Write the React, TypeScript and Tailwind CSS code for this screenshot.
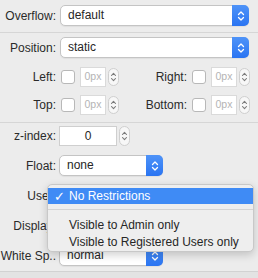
import type { ReactNode } from 'react';

const font = { fontFamily: '"Liberation Sans", Arial, sans-serif' };

function UpDown({ color = 'white' }: { color?: string }) {
  return (
    <svg width="8" height="12" viewBox="0 0 8 12" fill="none">
      <path d="M1.5 4.5 L4 2 L6.5 4.5" stroke={color} strokeWidth="1.3" strokeLinecap="round" strokeLinejoin="round" />
      <path d="M1.5 7.5 L4 10 L6.5 7.5" stroke={color} strokeWidth="1.3" strokeLinecap="round" strokeLinejoin="round" />
    </svg>
  );
}

function Select({ value, width }: { value: string; width: string }) {
  return (
    <div
      className={`flex h-[21px] items-stretch rounded-[5px] border border-[#c4c4c4] bg-white shadow-[0_1px_1px_rgba(0,0,0,0.06)] ${width}`}
    >
      <span className="flex-1 pl-[7px] text-[12px] leading-[19px] text-[#262626]">{value}</span>
      <span className="-my-px -mr-px flex w-[17px] items-center justify-center rounded-r-[5px] bg-gradient-to-b from-[#4e93f8] to-[#2a74f2]">
        <UpDown />
      </span>
    </div>
  );
}

function Stepper({ h = 'h-[18px]' }: { h?: string }) {
  return (
    <div className={`flex w-[11px] items-center justify-center rounded-full border border-[#cfcfcf] bg-[#f7f7f7] ${h}`}>
      <svg width="7" height="12" viewBox="0 0 7 12" fill="none">
        <path d="M1.5 4.5 L3.5 2.3 L5.5 4.5" stroke="#7c7c7c" strokeWidth="1.1" strokeLinecap="round" strokeLinejoin="round" />
        <path d="M1.5 7.5 L3.5 9.7 L5.5 7.5" stroke="#7c7c7c" strokeWidth="1.1" strokeLinecap="round" strokeLinejoin="round" />
      </svg>
    </div>
  );
}

function OffsetField({ label, labelWidth }: { label: string; labelWidth: string }) {
  return (
    <div className="flex items-center">
      <span className={`text-right text-[12px] text-[#2a2a2a] ${labelWidth}`}>{label}</span>
      <span className="ml-[5px] h-[14px] w-[14px] rounded-[3px] border border-[#b8b8b8] bg-white" />
      <span className="ml-[5px] flex h-[20px] w-[26px] items-center justify-center border border-[#dadada] bg-white text-[10.5px] text-[#b4b4b4]">
        0px
      </span>
      <span className="ml-[2px]">
        <Stepper />
      </span>
    </div>
  );
}

function Row({ label, children, mt, gap = 'ml-[3px]' }: { label: string; children: ReactNode; mt: string; gap?: string }) {
  return (
    <div className={`flex items-center ${mt}`}>
      <span className="w-[56px] shrink-0 whitespace-nowrap text-right text-[12px] text-[#2a2a2a]">{label}</span>
      <div className={gap}>{children}</div>
    </div>
  );
}

export default function App() {
  return (
    <div className="relative h-[278px] w-[258px] overflow-hidden bg-[#ececec]" style={font}>
      <div className="pt-[5px]">
        <Row label="Overflow:" mt="mt-0" gap="ml-[4px]">
          <Select value="default" width="w-[189px]" />
        </Row>
        <div className="mt-[6px] h-px bg-[#d6d6d6]" />
        <Row label="Position:" mt="mt-[4px]" gap="ml-[4px]">
          <Select value="static" width="w-[189px]" />
        </Row>

        {/* Offsets */}
        <div className="mt-[9px] flex items-center">
          <OffsetField label="Left:" labelWidth="w-[56px]" />
          <OffsetField label="Right:" labelWidth="w-[68px]" />
        </div>
        <div className="mt-[8px] flex items-center">
          <OffsetField label="Top:" labelWidth="w-[56px]" />
          <OffsetField label="Bottom:" labelWidth="w-[68px]" />
        </div>
        <div className="mt-[7px] h-px bg-[#d6d6d6]" />

        <Row label="z-index:" mt="mt-[3px]">
          <div className="flex items-center">
            <span className="flex h-[20px] w-[58px] items-center justify-center border border-[#cfcfcf] bg-white text-[12px] text-[#262626]">
              0
            </span>
            <span className="ml-[2px]">
              <Stepper h="h-[20px]" />
            </span>
          </div>
        </Row>
        <Row label="Float:" mt="mt-[9px]">
          <Select value="none" width="w-[104px]" />
        </Row>
        {/* these two rows sit under the open menu */}
        <Row label="User:" mt="mt-[9px]">
          <Select value="" width="w-[189px]" />
        </Row>
        <Row label="Display:" mt="mt-[9px]">
          <Select value="" width="w-[104px]" />
        </Row>
        <Row label="White Sp.." mt="mt-[9px]">
          <Select value="normal" width="w-[104px]" />
        </Row>
        <div className="mt-[5px] h-[10px] border-t border-[#d2d2d2] bg-[#e3e3e3]" />
      </div>

      {/* Open popup menu */}
      <div className="absolute left-[47px] top-[184px] h-[68px] w-[207px] rounded-[5px] border border-[#c8c8c8] bg-[#eeeeee] pt-[3px] text-[12px] text-[#262626] shadow-[0_3px_8px_rgba(0,0,0,0.18)]">
        <div className="flex h-[16px] items-center bg-[#3f8bf5] text-white">
          <span className="w-[21px] pl-[6px] text-[13px] leading-none">✓</span>
          <span>No Restrictions</span>
        </div>
        <div className="mt-[5px] h-px bg-[#d4d4d4]" />
        <div className="mt-[6px] flex h-[17px] items-center pl-[21px]">Visible to Admin only</div>
        <div className="flex h-[17px] items-center pl-[21px]">Visible to Registered Users only</div>
      </div>
    </div>
  );
}
